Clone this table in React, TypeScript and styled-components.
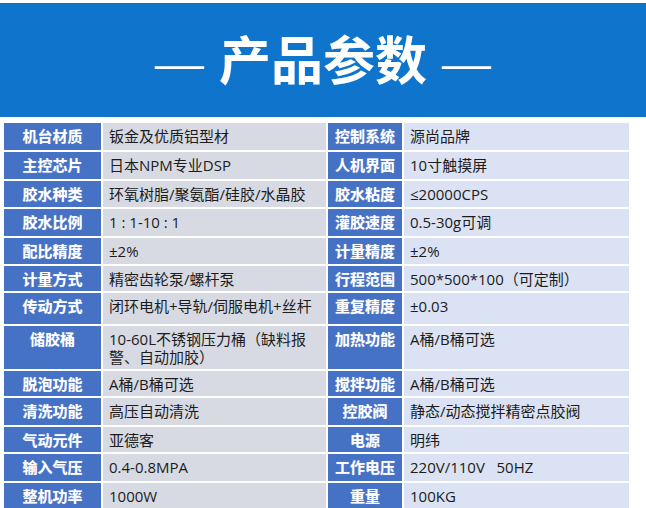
import React from "react";
import styled, { createGlobalStyle } from "styled-components";

const Global = createGlobalStyle`
  html, body { margin: 0; padding: 0; background: #ffffff; }
  body { width: 646px; height: 508px; overflow: hidden; font-family: "Noto Sans CJK SC", "Noto Sans", sans-serif; }
`;

const Page = styled.div`
  width: 646px;
  padding-top: 3px;
  display: flex;
  flex-direction: column;
`;

const Banner = styled.div`
  height: 114px;
  background: #0f75cc;
  display: flex;
  align-items: center;
  justify-content: center;
  color: #ffffff;
  padding-bottom: 4px;
  box-sizing: border-box;
`;

const Title = styled.h1`
  margin: 0;
  font-size: 52px;
  line-height: 1;
  font-weight: 700;
  letter-spacing: 0;
  display: flex;
  align-items: center;
  gap: 12px;
`;

const Dash = styled.span`
  font-weight: 300;
  font-size: 62px;
  line-height: 1;
`;

const Table = styled.div`
  margin: 6px 0 0 4px;
  display: flex;
  flex-direction: column;
  gap: 2px;
`;

const Row = styled.div<{ $h: number }>`
  display: grid;
  grid-template-columns: 97px 223px 74px 225px;
  column-gap: 2px;
  height: ${(p) => p.$h}px;
`;

const Label = styled.div`
  background: #4672c5;
  color: #ffffff;
  font-weight: 700;
  font-size: 15px;
  line-height: 18px;
  padding-top: 4px;
  text-align: center;
  box-sizing: border-box;
  white-space: nowrap;
  text-shadow: 0 0 1px rgba(255, 255, 255, 0.4);
`;

const Value = styled.div<{ $side: "left" | "right" }>`
  background: ${(p) => (p.$side === "left" ? "#d7dae3" : "#dae2f3")};
  color: #1c1c1c;
  font-family: "Open Sans", "Noto Sans CJK SC", sans-serif;
  font-size: 15px;
  line-height: 18px;
  padding: 4px 4px 0 6px;
  box-sizing: border-box;
  white-space: pre-wrap;
`;

type Item = [string, string, string, string, number];

const rows: Item[] = [
  ["机台材质", "钣金及优质铝型材", "控制系统", "源尚品牌", 27],
  ["主控芯片", "日本NPM专业DSP", "人机界面", "10寸触摸屏", 27],
  ["胶水种类", "环氧树脂/聚氨酯/硅胶/水晶胶", "胶水粘度", "≤20000CPS", 26],
  ["胶水比例", "1 : 1-10 : 1", "灌胶速度", "0.5-30g可调", 27],
  ["配比精度", "±2%", "计量精度", "±2%", 26],
  ["计量方式", "精密齿轮泵/螺杆泵", "行程范围", "500*500*100（可定制）", 25],
  ["传动方式", "闭环电机+导轨/伺服电机+丝杆", "重复精度", "±0.03", 31],
  ["储胶桶", "10-60L不锈钢压力桶（缺料报警、自动加胶）", "加热功能", "A桶/B桶可选", 43],
  ["脱泡功能", "A桶/B桶可选", "搅拌功能", "A桶/B桶可选", 25],
  ["清洗功能", "高压自动清洗", "控胶阀", "静态/动态搅拌精密点胶阀", 27],
  ["气动元件", "亚德客", "电源", "明纬", 25],
  ["输入气压", "0.4-0.8MPA", "工作电压", "220V/110V   50HZ", 27],
  ["整机功率", "1000W", "重量", "100KG", 25],
];

export default function App() {
  return (
    <Page>
      <Global />
      <Banner>
        <Title>
          <Dash>—</Dash>
          <span>产品参数</span>
          <Dash>—</Dash>
        </Title>
      </Banner>
      <Table>
        {rows.map(([a, b, c, d, h]) => (
          <Row key={a} $h={h}>
            <Label>{a}</Label>
            <Value $side="left">{b}</Value>
            <Label>{c}</Label>
            <Value $side="right">{d}</Value>
          </Row>
        ))}
      </Table>
    </Page>
  );
}
